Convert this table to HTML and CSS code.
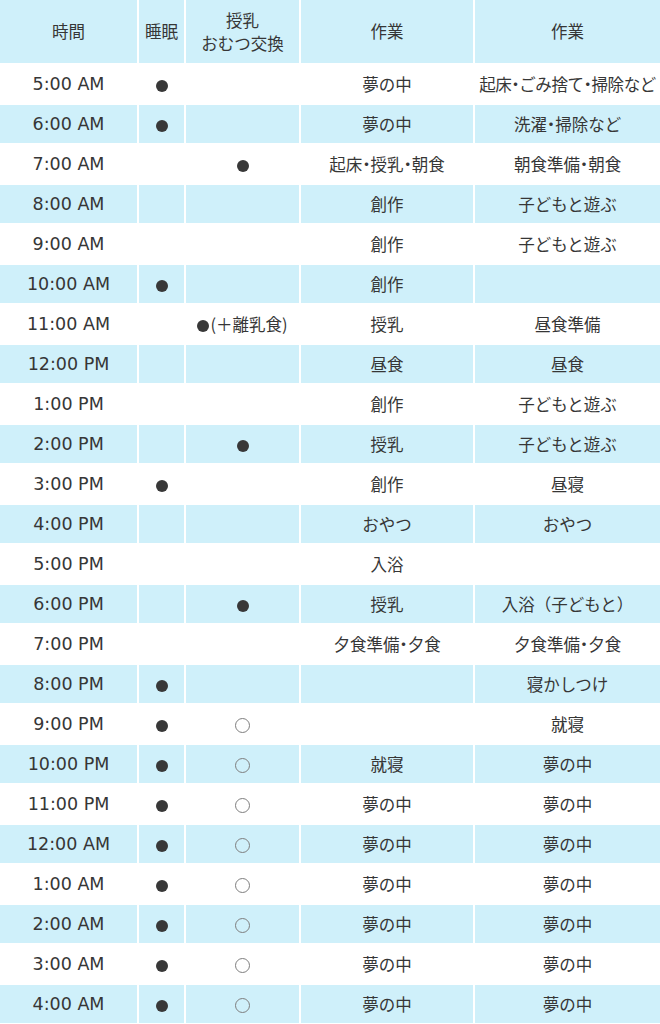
FILE: index.html
```html
<!DOCTYPE html>
<html lang="ja">
<head>
<meta charset="utf-8">
<link rel="stylesheet" href="styles.css">
</head>
<body>
<table class="schedule">
  <colgroup>
    <col class="c-time"><col class="c-sleep"><col class="c-feed"><col class="c-work1"><col class="c-work2">
  </colgroup>
  <thead>
    <tr><th>時間</th><th>睡眠</th><th>授乳<br>おむつ交換</th><th>作業</th><th>作業</th></tr>
  </thead>
  <tbody>
    <tr><td>5:00 AM</td><td><span class="dot"></span></td><td></td><td>夢の中</td><td class="long">起床<span class="sep">・</span>ごみ捨て<span class="sep">・</span>掃除など</td></tr>
    <tr><td>6:00 AM</td><td><span class="dot"></span></td><td></td><td>夢の中</td><td>洗濯<span class="sep">・</span>掃除など</td></tr>
    <tr><td>7:00 AM</td><td></td><td><span class="dot"></span></td><td>起床<span class="sep">・</span>授乳<span class="sep">・</span>朝食</td><td>朝食準備<span class="sep">・</span>朝食</td></tr>
    <tr><td>8:00 AM</td><td></td><td></td><td>創作</td><td>子どもと遊ぶ</td></tr>
    <tr><td>9:00 AM</td><td></td><td></td><td>創作</td><td>子どもと遊ぶ</td></tr>
    <tr><td>10:00 AM</td><td><span class="dot"></span></td><td></td><td>創作</td><td></td></tr>
    <tr><td>11:00 AM</td><td></td><td><span class="dot small"></span>(＋離乳食)</td><td>授乳</td><td>昼食準備</td></tr>
    <tr><td>12:00 PM</td><td></td><td></td><td>昼食</td><td>昼食</td></tr>
    <tr><td>1:00 PM</td><td></td><td></td><td>創作</td><td>子どもと遊ぶ</td></tr>
    <tr><td>2:00 PM</td><td></td><td><span class="dot"></span></td><td>授乳</td><td>子どもと遊ぶ</td></tr>
    <tr><td>3:00 PM</td><td><span class="dot"></span></td><td></td><td>創作</td><td>昼寝</td></tr>
    <tr><td>4:00 PM</td><td></td><td></td><td>おやつ</td><td>おやつ</td></tr>
    <tr><td>5:00 PM</td><td></td><td></td><td>入浴</td><td></td></tr>
    <tr><td>6:00 PM</td><td></td><td><span class="dot"></span></td><td>授乳</td><td>入浴（子どもと）</td></tr>
    <tr><td>7:00 PM</td><td></td><td></td><td>夕食準備<span class="sep">・</span>夕食</td><td>夕食準備<span class="sep">・</span>夕食</td></tr>
    <tr><td>8:00 PM</td><td><span class="dot"></span></td><td></td><td></td><td>寝かしつけ</td></tr>
    <tr><td>9:00 PM</td><td><span class="dot"></span></td><td><span class="ring"></span></td><td></td><td>就寝</td></tr>
    <tr><td>10:00 PM</td><td><span class="dot"></span></td><td><span class="ring"></span></td><td>就寝</td><td>夢の中</td></tr>
    <tr><td>11:00 PM</td><td><span class="dot"></span></td><td><span class="ring"></span></td><td>夢の中</td><td>夢の中</td></tr>
    <tr><td>12:00 AM</td><td><span class="dot"></span></td><td><span class="ring"></span></td><td>夢の中</td><td>夢の中</td></tr>
    <tr><td>1:00 AM</td><td><span class="dot"></span></td><td><span class="ring"></span></td><td>夢の中</td><td>夢の中</td></tr>
    <tr><td>2:00 AM</td><td><span class="dot"></span></td><td><span class="ring"></span></td><td>夢の中</td><td>夢の中</td></tr>
    <tr><td>3:00 AM</td><td><span class="dot"></span></td><td><span class="ring"></span></td><td>夢の中</td><td>夢の中</td></tr>
    <tr><td>4:00 AM</td><td><span class="dot"></span></td><td><span class="ring"></span></td><td>夢の中</td><td>夢の中</td></tr>
  </tbody>
</table>
</body>
</html>
```

FILE: styles.css
```css
html, body {
  margin: 0;
  padding: 0;
  background: #ffffff;
  overflow: hidden;
}

.schedule {
  margin: -2px;
  width: 664px;
  table-layout: fixed;
  border-collapse: separate;
  border-spacing: 2px;
  font-family: "DejaVu Sans", "Noto Sans CJK JP", sans-serif;
  font-size: 17.5px;
  color: #363636;
}

.c-time { width: 137px; }
.c-sleep { width: 45px; }
.c-feed { width: 113px; }
.c-work1 { width: 172px; }
.c-work2 { width: 185px; }

.schedule th,
.schedule td {
  padding: 0;
  text-align: center;
  vertical-align: middle;
  white-space: nowrap;
  overflow: hidden;
}

.schedule th {
  height: 63px;
  background: #cff0fa;
  font-weight: normal;
  line-height: 23px;
  font-size: 16.5px;
  font-family: "Noto Sans CJK JP", sans-serif;
}

.schedule td {
  height: 38px;
}

.schedule td:not(:first-child) {
  font-family: "Noto Sans CJK JP", sans-serif;
  font-size: 16.5px;
}

.schedule td.long {
  letter-spacing: -0.4px;
}

.schedule tbody tr:nth-child(even) td {
  background: #cff0fa;
}

.sep {
  font-feature-settings: "halt";
}

.dot {
  display: inline-block;
  width: 12px;
  height: 12px;
  border-radius: 50%;
  background: #383838;
  vertical-align: middle;
  position: relative;
  top: -1px;
}

.dot.small {
  margin-right: 1px;
}

.ring {
  display: inline-block;
  width: 13px;
  height: 13px;
  border-radius: 50%;
  border: 1px solid #7e7e7e;
  vertical-align: middle;
  position: relative;
  top: -1px;
}
```
